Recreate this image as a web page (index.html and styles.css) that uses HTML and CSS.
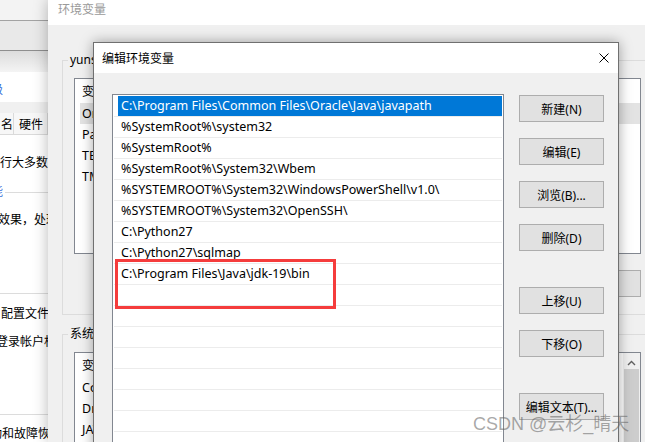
FILE: index.html
```html
<!DOCTYPE html>
<html>
<head>
  <meta charset="utf-8">
  <title>编辑环境变量</title>
  <link rel="stylesheet" href="styles.css">
</head>
<body>
<div class="desk">

  <!-- 系统属性 (behind, mostly covered) -->
  <div class="win sysprops">
    <div class="sp-band sp-b1"></div>
    <div class="sp-band sp-b2"></div>
    <div class="sp-band sp-b3"></div>
    <div class="sp-band sp-b4"><span class="sp-link cut-blue">级</span></div>
    <div class="sp-band sp-b5"></div>
    <div class="sp-tabs">
      <span class="sp-tab sp-tab1">名</span>
      <span class="sp-tab sp-tab2">硬件</span>
    </div>
    <div class="sp-page">
      <p class="sp-line sp-l1">行大多数更改，你必须作为管理员登录。</p>
      <div class="sp-sect"><span class="sp-link cut-blue">能</span><span class="sp-rule"></span></div>
      <p class="sp-line sp-l2 cut3">觉效果，处理器计划，内存使用</p>
      <div class="sp-hr sp-hr1"></div>
      <p class="sp-line sp-l3">配置文件</p>
      <p class="sp-line sp-l4 cut4">与登录帐户相关的桌面设置</p>
      <div class="sp-hr sp-hr2"></div>
      <p class="sp-line sp-l5 cut2">动和故障恢复</p>
    </div>
  </div>

  <!-- 环境变量 -->
  <div class="win envwin">
    <div class="env-title">环境变量</div>
    <div class="env-body">
      <fieldset class="group">
        <legend>yunshan 的用户变量(U)</legend>
        <div class="listview lv-user">
          <div class="lv-head">变量</div>
          <div class="lv-row lv-inactive">OneDrive</div>
          <div class="lv-row">Path</div>
          <div class="lv-row">TEMP</div>
          <div class="lv-row">TMP</div>
        </div>
        <div class="btnrow">
          <button class="btn btn-wide">新建(N)...</button>
          <button class="btn btn-wide">编辑(E)...</button>
          <button class="btn btn-wide">删除(D)</button>
        </div>
      </fieldset>

      <fieldset class="group group-sys">
        <legend>系统变量(S)</legend>
        <div class="listview lv-sys">
          <div class="lv-cols">
            <div class="lv-head">变量</div>
            <div class="lv-row">ComSpec</div>
            <div class="lv-row">DriverData</div>
            <div class="lv-row">JAVA_HOME</div>
            <div class="lv-row">NUMBER_OF_PROCESSORS</div>
          </div>
          <div class="vscroll">
            <svg class="vs-up" width="9" height="6" viewBox="0 0 9 6"><path d="M1 5 L4.5 1.5 L8 5" fill="none" stroke="#606060" stroke-width="1.4"/></svg>
            <div class="vs-thumb"></div>
          </div>
        </div>
      </fieldset>
    </div>
  </div>

  <!-- 编辑环境变量 -->
  <div class="win editdlg">
    <div class="dlg-title">
      <span>编辑环境变量</span>
      <svg class="dlg-close" width="10" height="10" viewBox="0 0 10 10"><path d="M0.5 0.5 L9.5 9.5 M9.5 0.5 L0.5 9.5" stroke="#000" stroke-width="1"/></svg>
    </div>
    <div class="dlg-body">
      <div class="pathlist">
        <div class="pl-row pl-sel"><span>C:\Program Files\Common Files\Oracle\Java\javapath</span></div>
        <div class="pl-row"><span>%SystemRoot%\system32</span></div>
        <div class="pl-row"><span>%SystemRoot%</span></div>
        <div class="pl-row"><span>%SystemRoot%\System32\Wbem</span></div>
        <div class="pl-row"><span>%SYSTEMROOT%\System32\WindowsPowerShell\v1.0\</span></div>
        <div class="pl-row"><span>%SYSTEMROOT%\System32\OpenSSH\</span></div>
        <div class="pl-row"><span>C:\Python27</span></div>
        <div class="pl-row"><span>C:\Python27\sqlmap</span></div>
        <div class="pl-row"><span>C:\Program Files\Java\jdk-19\bin</span></div>
        <div class="pl-row"><span></span></div>
        <div class="pl-row"><span></span></div>
        <div class="pl-row"><span></span></div>
        <div class="pl-row"><span></span></div>
        <div class="pl-row"><span></span></div>
        <div class="pl-row"><span></span></div>
        <div class="pl-row"><span></span></div>
        <div class="pl-row"><span></span></div>
        <div class="mark"></div>
      </div>
      <div class="btncol">
        <button class="btn">新建(N)</button>
        <button class="btn">编辑(E)</button>
        <button class="btn">浏览(B)...</button>
        <button class="btn">删除(D)</button>
        <button class="btn btn-sep">上移(U)</button>
        <button class="btn">下移(O)</button>
        <button class="btn btn-sep">编辑文本(T)...</button>
      </div>
    </div>
  </div>

  <div class="watermark">CSDN @云杉_晴天</div>
</div>
</body>
</html>
```

FILE: styles.css
```css
* { box-sizing: border-box; }
body {
  margin: 0;
  font-family: "Noto Sans", "Noto Sans CJK SC", sans-serif;
  font-size: 12px;
  color: #000;
}
.desk {
  position: relative;
  width: 645px;
  height: 442px;
  overflow: hidden;
  background: #f0f0f0;
}
.win { position: absolute; }

/* system properties, left strip */
.sysprops { left: 0; top: 0; width: 48px; height: 442px; overflow: hidden; background: #fff; }
.sp-band { width: 100%; }
.sp-b1 { height: 21px; background: #f3f3f3; border-bottom: 1px solid #a3a3a3; }
.sp-b2 { height: 30px; background: #e9e9e9; border-bottom: 1px solid #8e8e8e; }
.sp-b3 { height: 21px; background: linear-gradient(#dcdcdc, #f4f4f4); }
.sp-b4 { height: 30px; background: #fff; padding-top: 9px; }
.sp-b5 { height: 11px; background: #f0f0f0; }
.sp-link { color: #3a6fd8; line-height: 14px; }
.cut-blue { display: inline-block; margin-left: -9px; }
.sp-tabs { display: flex; height: 22px; background: #f0f0f0; border-bottom: 1px solid #dadada; }
.sp-tab { border-right: 1px solid #dadada; line-height: 23px; background: #f7f7f7; white-space: nowrap; }
.sp-tab1 { width: 14px; padding-left: 1px; }
.sp-tab2 { flex: 1; padding-left: 5px; }
.sp-page { background: #fff; }
.sp-line { margin: 0; line-height: 16px; white-space: nowrap; }
.sp-l1 { margin-top: 20px; }
.sp-sect { display: flex; align-items: center; height: 12px; margin-top: 15px; white-space: nowrap; }
.sp-rule { flex: 1; height: 1px; background: #dcdcdc; margin-left: 2px; }
.sp-l2 { margin-top: 14px; }
.sp-hr { height: 1px; background: #dcdcdc; }
.sp-hr1 { margin-top: 65px; }
.sp-l3 { margin-top: 12px; padding-left: 1px; }
.sp-l4 { margin-top: 12px; }
.sp-hr2 { margin-top: 64px; }
.sp-l5 { margin-top: 11px; }
.cut2 { margin-left: -10px; }
.cut3 { margin-left: -14px; }
.cut4 { margin-left: -16px; }

/* 环境变量 window */
.envwin {
  left: 48px; top: 0; width: 615px; height: 442px;
  background: #f0f0f0;
  box-shadow: 0 0 14px rgba(0, 0, 0, .28);
}
.env-title { height: 25px; background: #fff; padding-left: 10px; line-height: 19px; color: #9a9a9a; }
.env-body { padding: 28px 10px 0 14px; }
.group { margin: 0; padding: 11px 11px 17px; border: 1px solid #dcdcdc; min-width: 0; }
.group legend { padding: 0 2px; margin-left: -6px; line-height: 14px; white-space: nowrap; }
.group-sys { margin-top: 12px; padding-bottom: 0; border-bottom: none; }
.listview { border: 1px solid #828790; background: #fff; padding-left: 5px; }
.lv-user { height: 176px; }
.lv-sys { display: flex; height: 120px; padding-left: 0; }
.lv-cols { flex: 1; padding-left: 5px; }
.lv-head { height: 24px; line-height: 26px; padding-left: 2px; }
.lv-row { height: 21px; line-height: 21px; padding-left: 2px; font-size: 12.5px; white-space: nowrap; }
.lv-inactive { background: #e3e3e3; }
.vscroll { width: 17px; background: #f0f0f0; display: flex; flex-direction: column; align-items: center; }
.vs-up { margin-top: 7px; }
.vs-thumb { width: 15px; flex: 1; margin-top: 3px; background: #cdcdcd; }
.btnrow { display: flex; justify-content: flex-end; gap: 8px; margin-top: 16px; }
.btn-wide { width: 90px; }

/* 编辑环境变量 dialog */
.editdlg {
  left: 93px; top: 42px; width: 526px; height: 420px;
  background: #f0f0f0;
  border: 1px solid #707070;
  box-shadow: 0 0 12px rgba(0, 0, 0, .35);
}
.dlg-title {
  height: 30px; background: #fff;
  display: flex; align-items: center; justify-content: space-between;
  padding: 0 9px 0 8px;
}
.dlg-body { display: flex; gap: 15px; padding: 21px 14px 0 18px; }
.pathlist {
  position: relative;
  width: 392px; height: 360px;
  border: 1px solid #828790; background: #fff;
  padding: 1px 1px 0 1px;
  overflow: hidden;
}
.pl-row {
  height: 21px; padding-left: 4px;
  border-bottom: 1px solid #ececec;
  font-size: 12.5px; white-space: nowrap;
}
.pl-row span { display: block; height: 20px; line-height: 20px; padding-left: 3px; }
.pl-sel span { background: #0078d7; color: #fff; }
.mark {
  position: absolute; left: 2px; top: 164px;
  width: 221px; height: 50px;
  border: 3px solid #f53c3c;
}
.btncol { display: flex; flex-direction: column; gap: 16px; width: 85px; margin-top: 1px; }
.btn {
  height: 27px; padding: 0;
  border: 1px solid #adadad; background: #e1e1e1;
  font: inherit; color: #000; white-space: nowrap;
}
.btn-sep { margin-top: 20px; }

.watermark {
  position: absolute; left: 473px; top: 412px;
  font-family: "Liberation Sans", "Noto Sans CJK SC", sans-serif;
  font-size: 18px; line-height: 24px;
  color: rgba(95, 95, 95, .55);
  white-space: nowrap;
}
```
